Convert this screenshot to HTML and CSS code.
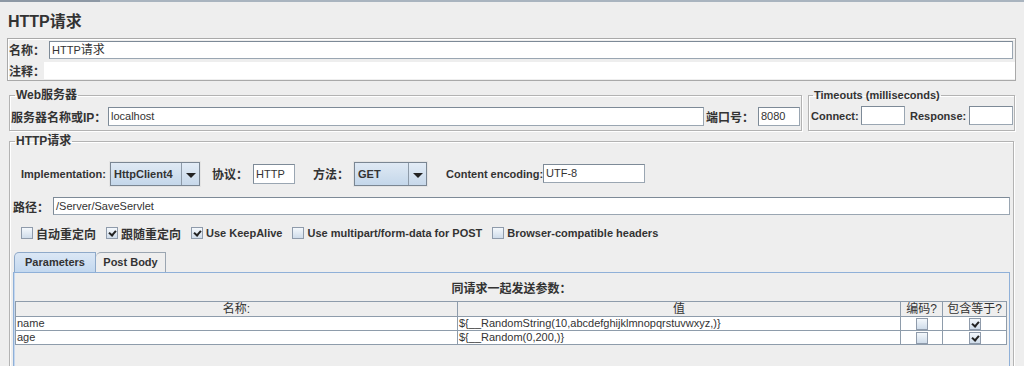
FILE: index.html
```html
<!DOCTYPE html>
<html lang="zh">

<head>
    <meta charset="UTF-8">
    <title>HTTP请求</title>
    <link rel="stylesheet" href="styles.css">
</head>

<body>
    <div class="topline"></div>
    <h1 class="title">HTTP请求</h1>

    <div class="namebox">
        <div class="name-row">
            <span class="lbl zh">名称：</span>
            <div class="field name-field">HTTP<span class="zh">请求</span></div>
        </div>
        <div class="comment-row">
            <span class="lbl zh">注释：</span>
            <div class="comment"></div>
        </div>
    </div>

    <div class="server-row">
        <fieldset class="group web">
            <legend class="zh">Web服务器</legend>
            <div class="line">
                <span class="lbl zh">服务器名称或IP：</span>
                <div class="field host">localhost</div>
                <span class="lbl zh port-lbl">端口号：</span>
                <div class="field port">8080</div>
            </div>
        </fieldset>
        <fieldset class="group timeouts">
            <legend>Timeouts (milliseconds)</legend>
            <div class="line">
                <span class="lbl con-lbl">Connect:</span>
                <div class="field tmo"></div>
                <span class="lbl resp-lbl">Response:</span>
                <div class="field tmo"></div>
            </div>
        </fieldset>
    </div>

    <fieldset class="group request">
        <legend class="zh">HTTP请求</legend>

        <div class="impl-row">
            <span class="lbl impl-lbl">Implementation:</span>
            <div class="combo impl-combo"><span class="combo-text">HttpClient4</span><span class="arrow"></span></div>
            <span class="lbl zh proto-lbl">协议：</span>
            <div class="field proto">HTTP</div>
            <span class="lbl zh method-lbl">方法：</span>
            <div class="combo method-combo"><span class="combo-text">GET</span><span class="arrow"></span></div>
            <span class="lbl enc-lbl">Content encoding:</span>
            <div class="field enc">UTF-8</div>
        </div>

        <div class="path-row">
            <span class="lbl zh">路径：</span>
            <div class="field path">/Server/SaveServlet</div>
        </div>

        <div class="check-row">
            <span class="check zh"><span class="box"></span>自动重定向</span>
            <span class="check zh"><span class="box checked"></span>跟随重定向</span>
            <span class="check"><span class="box checked"></span>Use KeepAlive</span>
            <span class="check"><span class="box"></span>Use multipart/form-data for POST</span>
            <span class="check"><span class="box"></span>Browser-compatible headers</span>
        </div>

        <div class="tabs">
            <div class="tab active">Parameters</div>
            <div class="tab">Post Body</div>
        </div>
        <div class="tab-panel">
            <div class="params-title zh">同请求一起发送参数：</div>
            <table class="params">
                <colgroup>
                    <col class="c-name">
                    <col class="c-value">
                    <col class="c-enc">
                    <col class="c-eq">
                </colgroup>
                <tr class="zh">
                    <th>名称:</th>
                    <th>值</th>
                    <th>编码?</th>
                    <th>包含等于?</th>
                </tr>
                <tr>
                    <td>name</td>
                    <td>${__RandomString(10,abcdefghijklmnopqrstuvwxyz,)}</td>
                    <td class="cb"><span class="box"></span></td>
                    <td class="cb"><span class="box checked"></span></td>
                </tr>
                <tr>
                    <td>age</td>
                    <td>${__Random(0,200,)}</td>
                    <td class="cb"><span class="box"></span></td>
                    <td class="cb"><span class="box checked"></span></td>
                </tr>
            </table>
        </div>
    </fieldset>
</body>

</html>
```

FILE: styles.css
```css
body {
    margin: 0;
    background-color: #eeeeee;
    font-family: "Liberation Sans", Arial, "Noto Sans CJK SC", sans-serif;
    font-size: 11px;
    color: #333333;
    overflow: hidden;
}

.zh {
    font-size: 12px;
}

.topline {
    height: 2px;
    background: linear-gradient(to right, #8d98a4 0, #8d98a4 100px, #a9b4bf 100px);
}

.title {
    margin: 0;
    padding: 9px 0 0 8px;
    height: 26px;
    font-size: 16px;
    line-height: 22px;
    font-weight: bold;
    color: #333333;
}

.lbl {
    flex-shrink: 0;
    font-weight: bold;
    white-space: nowrap;
}

.field {
    flex-shrink: 0;
    box-sizing: border-box;
    height: 19px;
    line-height: 17px;
    padding: 0 2px;
    background: #fff;
    border: 1px solid #9aa6b2;
    border-top-color: #7d8a97;
    border-left-color: #7d8a97;
    white-space: nowrap;
    overflow: hidden;
}

/* name / comment */

.namebox {
    box-sizing: border-box;
    margin: 1px 0 0 7px;
    width: 1009px;
    height: 43px;
    border: 1px solid #a9a9a9;
    box-shadow: inset 1px 1px 0 #fff;
}

.name-row {
    display: flex;
    align-items: center;
    height: 21px;
    padding: 0 1px 0 1px;
}

.name-row .lbl {
    width: 40px;
}

.name-row .field {
    flex: 1;
    height: 18px;
    line-height: 16px;
    margin-right: 1px;
}

.comment-row {
    display: flex;
    align-items: center;
    margin-top: 2px;
    height: 17px;
    padding-left: 1px;
}

.comment-row .lbl {
    width: 35px;
}

.comment {
    flex: 1;
    height: 17px;
    background: #fff;
}

/* fieldsets */

.group {
    margin: 0;
    padding: 0 1px 2px 1px;
    border: 1px solid #b3b3b3;
    box-shadow: inset 1px 1px 0 #fff, 1px 1px 0 #fff;
}

.group legend {
    margin-left: 4px;
    padding: 0 1px;
    line-height: 14px;
    font-weight: bold;
    color: #333333;
}

.line {
    display: flex;
    align-items: center;
    margin-top: 5px;
}

.server-row {
    display: flex;
    margin-top: 7px;
    padding-left: 9px;
}

.web {
    box-sizing: border-box;
    width: 792px;
    height: 43px;
}

.web .lbl {
    width: 97px;
}

.host {
    width: 596px;
}

.web .port-lbl {
    width: 52px;
    margin-left: 2px;
}

.port {
    width: 42px;
}

.timeouts {
    box-sizing: border-box;
    width: 206px;
    height: 43px;
    margin-left: 6px;
}

.timeouts legend {
    margin-left: 3px;
    margin-top: 1px;
}

.timeouts .line {
    margin-top: 4px;
    padding-left: 1px;
}

.timeouts .con-lbl {
    width: 50px;
}

.timeouts .resp-lbl {
    width: 59px;
    margin-left: 5px;
}

.tmo {
    width: 44px;
}

/* http request */

.request {
    box-sizing: border-box;
    width: 1005px;
    height: 232px;
    margin: 3px 0 0 9px;
    border-bottom: none;
    padding-bottom: 0;
}

.request legend {
    margin-left: 4px;
}

.impl-row {
    display: flex;
    align-items: center;
    height: 27px;
    margin-top: 12px;
    padding-left: 10px;
}

.impl-lbl {
    width: 88px;
}

.combo {
    flex-shrink: 0;
    box-sizing: border-box;
    display: flex;
    height: 26px;
    border: 1px solid #e4e4e4;
    box-shadow: inset 0 0 0 1px #7a8693;
}

.combo-text {
    flex: 1;
    margin: 1px 0 1px 1px;
    padding-left: 3px;
    line-height: 22px;
    font-weight: bold;
    background: linear-gradient(#dfe9f4, #c4d7ea);
    border-right: 1px solid #8d9aa8;
}

.arrow {
    position: relative;
    width: 17px;
    margin: 1px 1px 1px 0;
    background: linear-gradient(#e3ecf6, #c7d8ea);
}

.arrow::after {
    content: "";
    position: absolute;
    left: 4px;
    top: 10px;
    border-left: 5px solid transparent;
    border-right: 5px solid transparent;
    border-top: 5px solid #222;
}

.impl-combo {
    width: 92px;
}

.proto-lbl {
    width: 41px;
    margin-left: 11px;
}

.proto {
    width: 42px;
    height: 20px;
    line-height: 18px;
}

.method-lbl {
    width: 40px;
    margin-left: 18px;
}

.method-combo {
    width: 75px;
}

.enc-lbl {
    width: 97px;
    margin-left: 18px;
}

.enc {
    width: 102px;
    height: 19px;
}

.path-row {
    display: flex;
    align-items: center;
    margin-top: 10px;
    padding-left: 2px;
}

.path-row .lbl {
    width: 40px;
}

.path {
    width: 957px;
    height: 18px;
    line-height: 16px;
}

.check-row {
    display: flex;
    align-items: center;
    height: 14px;
    margin-top: 11px;
    padding-left: 10px;
}

.check {
    display: flex;
    align-items: center;
    margin-right: 10px;
    font-weight: bold;
    white-space: nowrap;
}

.box {
    flex-shrink: 0;
    box-sizing: border-box;
    display: inline-block;
    position: relative;
    width: 12px;
    height: 12px;
    margin-right: 3px;
    border: 1px solid #8f9bab;
    background: linear-gradient(#f4f8fc, #cfdcea);
}

.box.checked::after {
    content: "";
    position: absolute;
    left: 3px;
    top: 1px;
    width: 3px;
    height: 5px;
    border-right: 2px solid #222;
    border-bottom: 2px solid #222;
    transform: rotate(40deg);
}

/* tabs */

.tabs {
    display: flex;
    margin-top: 12px;
    padding-left: 3px;
    height: 20px;
}

.tab {
    box-sizing: border-box;
    height: 20px;
    line-height: 18px;
    font-weight: bold;
    text-align: center;
    white-space: nowrap;
    border: 1px solid #9aa5b1;
    border-bottom: none;
    border-top-left-radius: 5px;
}

.tab.active {
    width: 82px;
    background: linear-gradient(#dbe7f5, #c3d8ef);
    border-color: #8ea9c9;
}

.tab:nth-child(2) {
    width: 70px;
    border-left: none;
}

.tab-panel {
    box-sizing: border-box;
    margin-left: 2px;
    width: 997px;
    height: 120px;
    border: 1px solid #8fb0d8;
    border-bottom: none;
    box-shadow: inset 1px 0 0 #c5d7ee;
}

.params-title {
    margin-top: 9px;
    height: 19px;
    line-height: 14px;
    text-align: center;
    font-weight: bold;
}

.params {
    margin-left: 1px;
    width: 991px;
    border-collapse: collapse;
    table-layout: fixed;
}

.c-name {
    width: 442px;
}

.c-value {
    width: 443px;
}

.c-enc {
    width: 42px;
}

.c-eq {
    width: 64px;
}

.params th,
.params td {
    height: 13px;
    padding: 0 1px;
    line-height: 13px;
    border: 1px solid #8e9cab;
    white-space: nowrap;
    overflow: hidden;
}

.params th {
    font-weight: normal;
    text-align: center;
    background: #eeeeee;
    height: 14px;
}

.params td {
    background: #fff;
}

.params td.cb {
    text-align: center;
    padding: 0;
}

.params td.cb .box {
    margin: 1px 0 0 0;
    vertical-align: top;
}
```
